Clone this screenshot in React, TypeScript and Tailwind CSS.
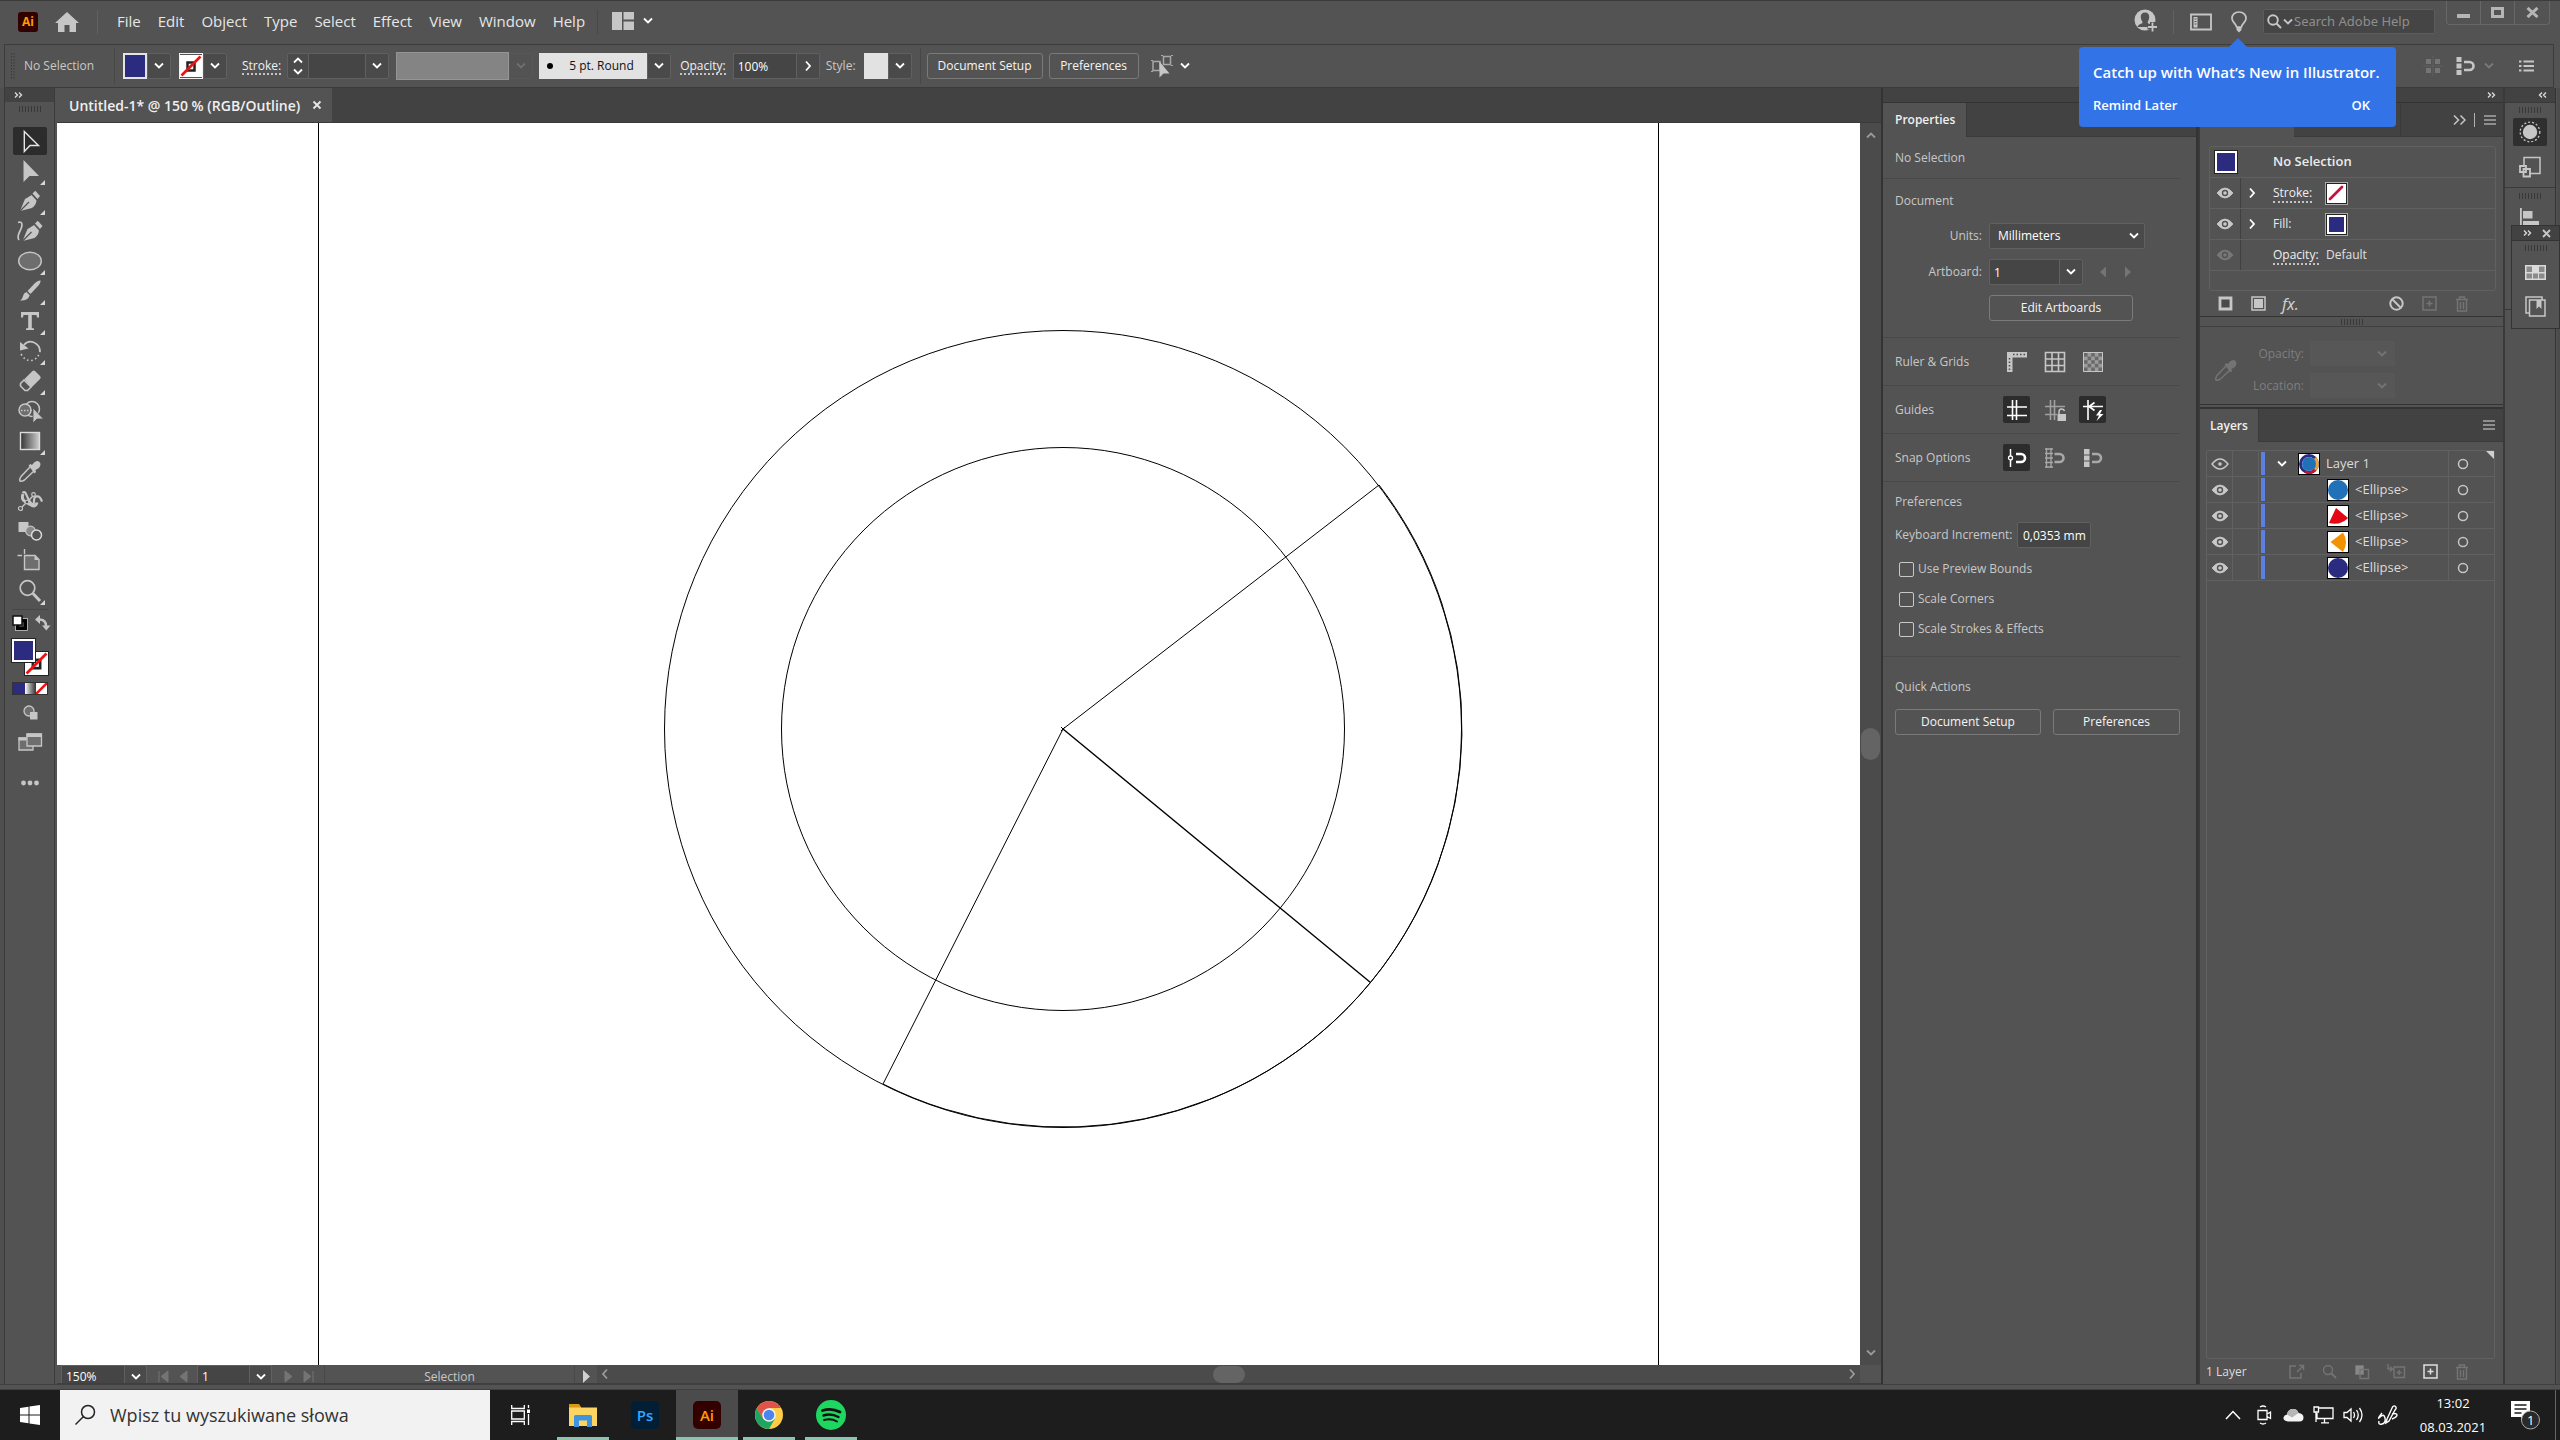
import type { ReactNode } from "react";

type IconProps = { w?: number; h?: number; box?: string; className?: string; children: ReactNode };

function Icon({ w = 26, h, box, className = "", children }: IconProps) {
  const hh = h ?? w;
  return (
    <svg width={w} height={hh} viewBox={box ?? `0 0 ${w} ${hh}`} fill="none" className={`shrink-0 ${className}`} aria-hidden="true">
      {children}
    </svg>
  );
}

const G = "#c6c6c6";

const Down = ({ className = "text-white" }: { className?: string }) => (
  <Icon w={12} h={8} className={className}>
    <path d="M2 1.5 6 5.5 10 1.5" stroke="currentColor" strokeWidth="1.8" />
  </Icon>
);

const Right = ({ className = "text-white" }: { className?: string }) => (
  <Icon w={8} h={12} className={className}>
    <path d="M2 1.5 6 6 2 10.5" stroke="currentColor" strokeWidth="1.8" />
  </Icon>
);

const DoubleRight = ({ flip = false }: { flip?: boolean }) => (
  <Icon w={10} h={8} className={flip ? "rotate-180" : ""}>
    <path d="M2 1.5 4.5 4 2 6.5M6 1.5 8.5 4 6 6.5" stroke="#d8d8d8" strokeWidth="1.4" />
  </Icon>
);

const Grip = () => (
  <Icon w={24} h={6}>
    <path d="M1.5 0v6M4.5 0v6M7.5 0v6M10.5 0v6M13.5 0v6M16.5 0v6M19.5 0v6M22.5 0v6" stroke="#383838" />
  </Icon>
);

const Menu = () => (
  <Icon w={14} h={12}>
    <path d="M1 2h12M1 6h12M1 10h12" stroke="#a8a8a8" strokeWidth="1.5" />
  </Icon>
);

const Eye = ({ hollow = false, className = "text-[#c8c8c8]" }: { hollow?: boolean; className?: string }) => (
  <Icon w={18} h={14} className={className}>
    <path
      d="M1 7Q5 2 9 2t8 5Q13 12 9 12T1 7Z"
      fill={hollow ? "none" : "currentColor"}
      stroke="currentColor"
      strokeWidth={hollow ? 1.4 : 0.8}
    />
    <circle cx="9" cy="7" r="3.2" fill="#535353" />
    <circle cx="9" cy="7" r="1.8" fill="currentColor" />
  </Icon>
);

const NoneSwatch = () => (
  <Icon w={22} h={22} className="h-full w-full">
    <rect width="22" height="22" fill="#fff" />
    <rect x="7.5" y="7.5" width="7" height="8" stroke="#222" strokeWidth="2.5" />
    <path d="M1.5 20.5 20.5 1.5" stroke="#ee1111" strokeWidth="2.6" />
  </Icon>
);

const Trash = ({ color = "#747474" }: { color?: string }) => (
  <Icon w={14} h={16}>
    <path d="M1 3.5h12M4.5 3V1h5v2M2.5 4v11h9V4M5.5 6v7M8.5 6v7" stroke={color} strokeWidth="1.4" />
  </Icon>
);

const Plus = ({ color }: { color: string }) => (
  <Icon w={15} h={15}>
    <path d="M1 1h13v13H1zM7.5 4.5v6M4.5 7.5h6" stroke={color} strokeWidth="1.5" />
  </Icon>
);

const Dropper = ({ color = G }: { color?: string }) => (
  <Icon>
    <path d="M13 9 4 18.5Q2 22 3 23T7.5 22L17 13" stroke={color} strokeWidth="1.5" />
    <path d="M11.5 7.5l2-1.5 1.5 1Q19 1.5 22 3.5t0 6.500l-3.5 2 .5 2-1.5 1.5z" fill={color} />
  </Icon>
);

const Nib = ({ x = 0 }: { x?: number }) => (
  <g transform={`translate(${x} 0)`}>
    <path d="M3 23 8 11Q13 8 14.5 7l5 5.5Q19 17 15 20Z" fill={G} />
    <path d="M3 23 12 14" stroke="#535353" strokeWidth="1.3" />
    <path d="M15.5 5.5 18.3 2.7 23 8 20.5 11Z" fill={G} />
  </g>
);

const tools: { name: string; corner?: boolean; art: ReactNode }[] = [
  { name: "Selection", art: <path d="M7.3 3.5V23.5L13 17.5H21.5Z" stroke="#e6e6e6" strokeWidth="1.4" /> },
  { name: "Direct selection", corner: true, art: <path d="M6.5 2V24L12.5 18H22Z" fill={G} /> },
  { name: "Pen", corner: true, art: <Nib /> },
  {
    name: "Curvature",
    art: (
      <>
        <Nib x={2.5} />
        <path d="M1 4.5Q5 3 5 7 5 9 2.5 14T2 22" stroke={G} strokeWidth="1.7" />
      </>
    ),
  },
  { name: "Ellipse", corner: true, art: <ellipse cx="13" cy="13" rx="11.3" ry="8.8" fill="#6e6e6e" stroke={G} strokeWidth="1.4" /> },
  {
    name: "Paintbrush",
    corner: true,
    art: (
      <>
        <path d="M23.5 2.5Q21 2 18 5L10.5 13 13.5 16 21 8Q24 4 23.5 2.5Z" fill={G} />
        <path d="M9.5 14 12.7 17.2Q11 23 3 22.5 5.5 21 6 18T9.5 14Z" fill={G} />
      </>
    ),
  },
  { name: "Type", corner: true, art: <path d="M4 4H22V9.5H20L19.5 7H14.8V20L17 20.5V22H9V20.5L11.2 20V7H6.5L6 9.5H4Z" fill={G} /> },
  {
    name: "Rotate",
    corner: true,
    art: (
      <>
        <path d="M7 7Q11 2 17 4.5T23 14" stroke={G} strokeWidth="1.8" />
        <path d="M3 4V12.5L11.5 10.5Z" fill={G} />
        <path d="M4 16Q8 23 14 22.5T23 14" stroke={G} strokeWidth="1.6" strokeDasharray="1.6 2.6" />
      </>
    ),
  },
  {
    name: "Eraser",
    corner: true,
    art: (
      <>
        <path d="M7.5 11 15.5 3Q17 2 18.5 3.5L23 8Q24.5 9.5 23 11L14.5 19.5Z" fill={G} />
        <path d="M7 12 3.5 15.5V18L8 22.5H10.5L14 19Z" stroke={G} strokeWidth="1.6" />
      </>
    ),
  },
  {
    name: "Shape builder",
    art: (
      <>
        <circle cx="15" cy="11" r="7.5" stroke={G} strokeWidth="1.5" />
        <circle cx="8" cy="12" r="6" fill="#6e6e6e" stroke={G} strokeWidth="1.5" />
        <path d="M4 12.5H18" stroke={G} strokeWidth="1.4" strokeDasharray="1.5 1.5" />
        <path d="M16 10V25L20 21H26.5Z" fill={G} stroke="#535353" strokeWidth=".8" />
      </>
    ),
  },
  {
    name: "Gradient",
    corner: true,
    art: (
      <>
        <defs>
          <linearGradient id="toolGradient">
            <stop offset="0" stopColor="#333" />
            <stop offset="1" stopColor="#d0d0d0" />
          </linearGradient>
        </defs>
        <rect x="3.5" y="4.5" width="19" height="17" fill="url(#toolGradient)" stroke="#dcdcdc" strokeWidth="1.4" />
      </>
    ),
  },
  { name: "Eyedropper", art: null },
  {
    name: "Puppet warp",
    art: (
      <>
        <path d="M5.5 5Q8 2.5 9.5 7T14 15Q17 18 17 13T20 8.5Q23 8 25 13.5" stroke={G} strokeWidth="2.2" />
        <path d="M6 6Q4 11 8 13.5T15 17.500Q19 19 20 14.5" stroke={G} strokeWidth="3" />
        <path d="M4 20 16 8" stroke={G} strokeWidth="1.4" />
        <circle cx="3.5" cy="20.5" r="2" fill="#535353" stroke={G} strokeWidth="1.2" />
        <circle cx="16.5" cy="6.5" r="1.8" fill="#535353" stroke={G} strokeWidth="1.2" />
        <circle cx="10" cy="14" r="1.8" fill="#535353" stroke={G} />
      </>
    ),
  },
  {
    name: "Blend",
    art: (
      <>
        <rect x="1.5" y="4" width="10" height="10" fill={G} />
        <circle cx="13.5" cy="13" r="4.8" fill="#888" stroke={G} strokeWidth="1.2" />
        <circle cx="19.5" cy="17" r="5" fill="#535353" stroke="#dadada" strokeWidth="1.5" />
      </>
    ),
  },
  {
    name: "Artboard",
    art: (
      <>
        <path d="M7.5 1V6M.5 7.5H5" stroke={G} strokeWidth="1.4" />
        <path d="M7.5 7.5H18L22 11.5V21.5H7.5Z" fill="#6e6e6e" stroke={G} strokeWidth="1.4" />
        <path d="M17.5 7.5V12H22Z" fill={G} />
      </>
    ),
  },
  {
    name: "Zoom",
    corner: true,
    art: (
      <>
        <circle cx="10.5" cy="10" r="7.3" stroke={G} strokeWidth="1.7" />
        <path d="M16 15.5 23 23" stroke={G} strokeWidth="3" />
      </>
    ),
  },
];

function Toolbar() {
  return (
    <aside className="flex w-[57px] shrink-0 flex-col border-l-4 border-[#4f4f4f] pr-[2px]">
      <div className="flex flex-1 flex-col items-center border-r border-l border-[#3a3a3a]">
        <div className="flex h-[14px] w-full items-center bg-[#424242] pl-2">
          <DoubleRight />
        </div>
        <div className="flex h-[13px] items-center">
          <Grip />
        </div>
        <nav className="flex flex-col items-center gap-[2px] pt-3" aria-label="Tools">
          {tools.map((t, i) => (
            <button
              key={t.name}
              aria-label={t.name}
              className={`relative flex h-7 w-[34px] items-center justify-center rounded-[2px] ${i === 0 ? "bg-[#2c2c2c]" : ""}`}
            >
              {t.art ? <Icon>{t.art}</Icon> : <Dropper />}
              {t.corner && (
                <Icon w={5} h={5} className="absolute right-0.5 bottom-0">
                  <path d="M5 0V5H0Z" fill="#d8d8d8" />
                </Icon>
              )}
            </button>
          ))}
        </nav>
        <div className="mt-1 h-px w-9 bg-[#474747]" />
        <div className="mt-1 flex w-full justify-between pr-0.5 pl-1.5">
          <button aria-label="Default fill and stroke">
            <Icon w={18}>
              <rect x="6.5" y="6.5" width="8" height="8" fill="#535353" stroke="#000" strokeWidth="3.5" />
              <rect x="4.5" y="4.5" width="12" height="12" stroke={G} strokeWidth=".8" />
              <rect x="2" y="2" width="9" height="9" fill="#fff" stroke="#111" strokeWidth="1.5" />
            </Icon>
          </button>
          <button aria-label="Swap fill and stroke">
            <Icon w={18}>
              <path d="M5 5.5Q12 5.5 12 12" stroke={G} strokeWidth="2.4" />
              <path d="M6 1V10L1 5.5ZM8 11.5h8.5L12.3 16.5Z" fill={G} />
            </Icon>
          </button>
        </div>
        <div className="relative mt-1.5 h-[38px] w-[38px]">
          <div className="absolute right-0 bottom-0 h-[25px] w-[25px] border border-[#222]">
            <NoneSwatch />
          </div>
          <div className="absolute top-0 left-0 h-[25px] w-[25px] border border-[#222] bg-white p-[2px]">
            <div className="h-full bg-[#2b2b80]" />
          </div>
        </div>
        <div className="mt-1.5 flex h-[13px] w-9 border border-[#333]">
          <div className="w-3 bg-[#2b2b80]" />
          <div className="w-[11px] bg-linear-to-r from-white to-[#333]" />
          <div className="flex-1 bg-white">
            <Icon w={11} h={11}>
              <path d="M0 11 11 0" stroke="#ee1111" strokeWidth="2.5" />
            </Icon>
          </div>
        </div>
        <button aria-label="Drawing mode" className="mt-1.5">
          <Icon w={24}>
            <circle cx="11" cy="10" r="5" fill="#6e6e6e" stroke={G} strokeWidth="1.3" />
            <rect x="12" y="11" width="7.5" height="7.5" fill={G} />
          </Icon>
        </button>
        <button aria-label="Screen mode" className="mt-1">
          <Icon>
            <path d="M2 9h14v12H2z" fill="#6e6e6e" stroke={G} strokeWidth="1.3" />
            <path d="M1.5 8.5h8v3h-8z" fill={G} />
            <path d="M10 5h14.500v12H10z" fill="#6e6e6e" stroke={G} strokeWidth="1.3" />
            <path d="M9.5 4.5h15v3.5h-15z" fill={G} />
          </Icon>
        </button>
        <button aria-label="Edit toolbar" className="mt-4">
          <Icon>
            <circle cx="6.5" cy="12" r="2.4" fill={G} />
            <circle cx="13" cy="12" r="2.4" fill={G} />
            <circle cx="19.5" cy="12" r="2.4" fill={G} />
          </Icon>
        </button>
      </div>
    </aside>
  );
}

const menus = ["File", "Edit", "Object", "Type", "Select", "Effect", "View", "Window", "Help"];

function TitleBar() {
  return (
    <header className="flex h-11 shrink-0 items-center border-t border-[#3c3c3c] pr-[10px] pb-[2px] pl-[18px]">
      <div className="flex h-5 w-5 items-center justify-center rounded-[3px] bg-[#330000] text-[12px] font-bold text-[#ff9a00]">Ai</div>
      <button aria-label="Home" className="ml-[17px]">
        <Icon w={24} h={20}>
          <path d="M12 0 24 11H21V20H14.5V13H9.5V20H3V11H0Z" fill={G} />
        </Icon>
      </button>
      <div className="ml-[18px] h-6 w-px bg-[#626262]" />
      <nav className="mb-[2px] ml-[19px] flex gap-[17px] text-[15px] leading-5 text-[#e6e6e6]">
        {menus.map((m) => (
          <button key={m}>{m}</button>
        ))}
      </nav>
      <div className="ml-3 h-6 w-px bg-[#484848]" />
      <button aria-label="Workspace layout" className="mb-[2px] ml-[14px] flex items-center gap-2">
        <Icon w={22} h={20}>
          <path d="M0 1h10v18H0zM11.5 1H22v7.500H11.5zM11.5 10.5H22V19H11.5z" fill={G} />
        </Icon>
        <Down />
      </button>
      <div className="flex-1" />
      <button aria-label="Account">
        <Icon w={25} h={25}>
          <circle cx="11" cy="11" r="10.5" fill={G} />
          <path d="M11 3.500c3 0 4.500 2 4.200 5-.2 2.500-1.500 3.500-1.500 5 0 1.300 5 2 5 4.500H3.500c0-2.500 5-3.200 5-4.500 0-1.500-1.500-2.500-1.700-5C6.500 5.500 8 3.500 11 3.500Z" fill="#535353" />
          <path d="M18.5 13v10M13.5 18h10" stroke="#535353" strokeWidth="5" />
          <path d="M18.5 13.5v9M14 18h9" stroke={G} strokeWidth="1.8" />
        </Icon>
      </button>
      <div className="ml-[14px] h-6 w-px bg-[#626262]" />
      <button aria-label="Panels" className="ml-4">
        <Icon w={22} h={18}>
          <path d="M1 1.5h20v15H1z" stroke={G} strokeWidth="1.8" />
          <path d="M3.5 4h4v10.5h-4z" fill={G} />
          <path d="M4.5 6h2M4.5 8.5h2M4.5 11h2" stroke="#535353" />
        </Icon>
      </button>
      <div className="relative ml-[19px] flex items-center">
        <button aria-label="Discover">
          <Icon w={16} h={22}>
            <path d="M8 1C3.5 1 1 4 1 7.5 1 11 5 12.5 5.5 16h5C11 12.5 15 11 15 7.5 15 4 12.5 1 8 1Z" stroke={G} strokeWidth="1.7" />
            <path d="M5.5 16h5v3L8 21.5 5.5 19Z" fill={G} />
          </Icon>
        </button>
        <WhatsNew />
      </div>
      <div className="ml-4 flex h-[25px] w-[172px] items-center rounded-[2px] border border-[#5c5c5c] bg-[#454545] pl-[3px]">
        <Icon w={15} h={15}>
          <circle cx="6" cy="6" r="4.8" stroke={G} strokeWidth="1.9" />
          <path d="m9.5 9.5 4.5 4.5" stroke={G} strokeWidth="2" />
        </Icon>
        <Down className="text-[#c6c6c6]" />
        <input aria-label="Search Adobe Help" placeholder="Search Adobe Help" className="w-[135px] bg-transparent font-['Noto_Sans',sans-serif] text-[13px] text-white outline-none placeholder:text-[#8f8f8f]" />
      </div>
      <div className="ml-[11px] flex h-6 self-start rounded-b-[4px] border border-t-0 border-[#676767]">
        <button aria-label="Minimize" className="flex w-[34px] items-center justify-center border-r border-[#676767]">
          <Icon w={13} h={13}><path d="M0 8h13v4H0z" fill="#b5b5b5" /></Icon>
        </button>
        <button aria-label="Maximize" className="flex w-[34px] items-center justify-center border-r border-[#676767]">
          <Icon w={13} h={11}><path d="M1.5 1.5h10v8h-10z" stroke="#b5b5b5" strokeWidth="3" /></Icon>
        </button>
        <button aria-label="Close" className="flex w-[34px] items-center justify-center">
          <Icon w={13} h={11}><path d="m1.5 1 10 9M11.5 1l-10 9" stroke="#b5b5b5" strokeWidth="3" /></Icon>
        </button>
      </div>
    </header>
  );
}

function WhatsNew() {
  return (
    <div role="dialog" aria-label="What's New" className="absolute top-[36px] left-[-152px] z-20 h-20 w-[317px] rounded-[4px] bg-[#3273e8] px-[14px] pt-[14px] text-white">
      <Icon w={20} h={10} className="absolute top-[-9px] left-[149px]">
        <path d="M0 10 10 0 20 10Z" fill="#3273e8" />
      </Icon>
      <div className="text-[15px] leading-[22px] font-semibold whitespace-nowrap">Catch up with What’s New in Illustrator.</div>
      <div className="mt-3 flex justify-between pr-3 text-[13px] leading-5 font-semibold">
        <button>Remind Later</button>
        <button>OK</button>
      </div>
    </div>
  );
}

const DropButton = ({ label, faded = false }: { label: string; faded?: boolean }) => (
  <button
    aria-label={label}
    className={`flex h-[26px] w-6 items-center justify-center rounded-r-[2px] border ${faded ? "border-[#575757]" : "border-[#606060] bg-[#4a4a4a]"}`}
  >
    <Down className={faded ? "text-[#6f6f6f]" : "text-white"} />
  </button>
);

const underlined = "border-b-2 border-dotted border-[#c4c4c4] leading-[15px] text-[#f0f0f0]";
const outlineButton = "h-[26px] rounded-[3px] border border-[#7a7a7a] text-[12px] leading-[22px] font-medium text-[#f5f5f5]";

function ControlBar() {
  return (
    <div className="mr-[6px] ml-1 flex h-11 shrink-0 items-center border border-[#3c3c3c] text-[12px] text-[#c8c8c8]">
      <Icon w={5} h={26} className="ml-[5px]">
        <path d="M1.5 0v26M4 0v26" stroke="#3a3a3a" strokeDasharray="1.5 1.5" />
      </Icon>
      <span className="ml-[9px] w-[90px]">No Selection</span>
      <div className="h-9 w-px bg-[#474747]" />
      <button aria-label="Fill colour" className="ml-2 h-[26px] w-6 border-2 border-[#e4e4e4] bg-[#2b2b80]" />
      <DropButton label="Fill options" />
      <button aria-label="Stroke colour" className="ml-2 h-[26px] w-6 border border-[#f0f0f0]"><NoneSwatch /></button>
      <DropButton label="Stroke options" />
      <label htmlFor="strokeWeight" className={`ml-[15px] ${underlined}`}>Stroke:</label>
      <div className="ml-[6px] flex h-[26px] w-[22px] flex-col items-center justify-between rounded-l-[2px] border border-[#606060] bg-[#4a4a4a] py-[2px]">
        <button aria-label="Increase stroke" className="rotate-180"><Down /></button>
        <button aria-label="Decrease stroke"><Down /></button>
      </div>
      <input id="strokeWeight" className="h-[26px] w-14 border-y border-[#606060] bg-[#454545] px-1" />
      <DropButton label="Stroke weights" />
      <div className="ml-[7px] h-7 w-[113px] border border-[#949494] bg-[#848484]" />
      <DropButton label="Width profile" faded />
      <button className="ml-[6px] flex h-[26px] w-[108px] items-center bg-[#e2e2e2] pl-2 text-[#111]">
        <span className="h-[6px] w-[6px] rounded-full bg-black" />
        <span className="ml-4">5 pt. Round</span>
      </button>
      <DropButton label="Brushes" />
      <label htmlFor="opacity" className={`ml-[9px] ${underlined}`}>Opacity:</label>
      <input id="opacity" defaultValue="100%" className="ml-[7px] h-[26px] w-16 border border-[#606060] bg-[#454545] px-1 text-white" />
      <button aria-label="Opacity slider" className="flex h-[26px] w-[23px] items-center justify-center rounded-r-[2px] border border-l-0 border-[#606060] bg-[#4a4a4a]"><Right /></button>
      <span className="ml-[6px]">Style:</span>
      <button aria-label="Graphic style" className="ml-2 h-[26px] w-6 bg-[#e2e2e2]" />
      <DropButton label="Styles" />
      <div className="ml-2 h-9 w-px bg-[#474747]" />
      <button className={`${outlineButton} ml-[6px] w-[116px]`}>Document Setup</button>
      <button className={`${outlineButton} ml-[6px] w-[90px]`}>Preferences</button>
      <button aria-label="Select similar" className="ml-3 flex items-center gap-1.5">
        <Icon w={22} h={24}>
          <path d="M2 7.5h7v9H2zM12.5 2.5h7v8h-7z" stroke="#a8a8a8" strokeWidth="1.5" />
          <path d="M0 6.5h2M0 17.5h2M10 1.5h2M20 1.5h2M20 11.5h2" stroke="#a8a8a8" />
          <path d="M8.5 7.5v16l4-4h6Z" fill={G} />
        </Icon>
        <Down />
      </button>
      <div className="flex-1" />
      <Icon w={20} h={20}>
        <path d="M3 3h5v5H3zM12 3h5v5h-5zM3 12h5v5H3zM12 12h5v5h-5z" fill="#757575" />
        <path d="M10 0v20M0 10h20" stroke="#616161" />
      </Icon>
      <button aria-label="Snap to pixel" className="ml-3 flex items-center gap-2">
        <Icon w={20} h={20}>
          <path d="M1.5 1h5v5h-5zM1.5 7.5h5v5h-5zM1.5 14h5v5h-5z" fill={G} />
          <path d="M9 6h5.500a4 4 0 0 1 0 8H9" stroke={G} strokeWidth="2.6" />
        </Icon>
        <Down className="text-[#7a7a7a]" />
      </button>
      <button aria-label="Control menu" className="mr-[18px] ml-6">
        <Icon w={16} h={12}>
          <path d="M0 1.5h2.5M0 6h2.5M0 10.5h2.5M4.5 1.5H15M4.5 6H15M4.5 10.5H15" stroke={G} strokeWidth="1.8" />
        </Icon>
      </button>
    </div>
  );
}

function Artwork() {
  return (
    <svg className="h-full w-full" viewBox="0 0 1803 1242" preserveAspectRatio="xMidYMid slice" fill="none" stroke="#000" strokeWidth="1" aria-label="Artboard">
      <path d="M261.5 0V1242M1601.5 0V1242" />
      <circle cx="1006" cy="606" r="398.5" />
      <circle cx="1006" cy="606" r="281.5" />
      <path d="M1322 362A398.5 398.5 0 0 1 1313.5 859.5 398.5 398.5 0 0 1 826 961L1006 606Z" />
      <path d="M1006 606 1313.5 859.5" strokeWidth="1.4" />
      <path d="m1004 604 4 4M1008 604l-4 4" />
    </svg>
  );
}

const navTriangle = "text-[#747474]";

function Workspace() {
  return (
    <main className="flex min-w-0 flex-1 flex-col">
      <div className="flex h-[35px] shrink-0 border-b border-[#3a3a3a] bg-[#424242]">
        <div className="flex w-[275px] items-center gap-3 bg-[#535353] pl-3 text-[14px] font-semibold whitespace-nowrap text-[#f0f0f0]">
          <span>Untitled-1* @ 150 % (RGB/Outline)</span>
          <button aria-label="Close document">
            <Icon w={10} h={10}><path d="m1.5 1.5 7 7M8.5 1.5l-7 7" stroke="#e6e6e6" strokeWidth="1.9" /></Icon>
          </button>
        </div>
      </div>
      <div className="flex min-h-0 flex-1">
        <div className="min-w-0 flex-1 overflow-hidden bg-white"><Artwork /></div>
        <div className="flex w-[21px] flex-col items-center justify-between bg-[#4b4b4b] py-2">
          <button aria-label="Scroll up" className="rotate-180"><Down className="text-[#9a9a9a]" /></button>
          <div className="h-8 w-[19px] rounded-full bg-[#646464]" />
          <button aria-label="Scroll down"><Down className="text-[#9a9a9a]" /></button>
        </div>
      </div>
      <div className="flex h-[19px] shrink-0 items-center border-b border-[#3f3f3f] pl-1 text-[12px] text-[#c8c8c8]">
        <input aria-label="Zoom level" defaultValue="150%" className="h-full w-16 border border-b-0 border-[#606060] bg-[#454545] pt-1 pl-1 text-white" />
        <button aria-label="Zoom levels" className="flex h-full w-[22px] items-center justify-center border border-b-0 border-l-0 border-[#606060] bg-[#4a4a4a] pt-1"><Down /></button>
        <Icon w={46} h={19} className={navTriangle}>
          <path d="M12 6v11M21 6v11l-7-5.500ZM40 6v11l-7-5.500Z" fill="currentColor" stroke="currentColor" />
        </Icon>
        <input aria-label="Artboard number" defaultValue="1" className="ml-1 h-full w-[53px] border border-b-0 border-[#606060] bg-[#454545] pt-1 pl-1 text-white" />
        <button aria-label="Artboards" className="flex h-full w-[22px] items-center justify-center border border-b-0 border-l-0 border-[#606060] bg-[#4a4a4a] pt-1"><Down /></button>
        <Icon w={52} h={19} className={navTriangle}>
          <path d="M13 6v11l7-5.500ZM32 6v11l7-5.500ZM41 6v11" fill="currentColor" stroke="currentColor" />
        </Icon>
        <div className="h-full w-[251px] border-x border-[#484848] pt-1 text-center leading-4">Selection</div>
        <Icon w={22} h={19}><path d="M8 5v13l7-6.500Z" fill="#d0d0d0" /></Icon>
        <div className="flex h-full min-w-0 flex-1 items-center justify-between bg-[#4b4b4b] px-1">
          <button aria-label="Scroll left" className="rotate-180"><Right className="text-[#9a9a9a]" /></button>
          <div className="h-[17px] w-8 rounded-full bg-[#646464]" />
          <button aria-label="Scroll right"><Right className="text-[#9a9a9a]" /></button>
        </div>
        <div className="w-[21px]" />
      </div>
    </main>
  );
}

const line = "border-b border-[#494949]";

function IconToggle({ label, on = false, children }: { label: string; on?: boolean; children: ReactNode }) {
  return (
    <button aria-label={label} aria-pressed={on} className={`flex h-[27px] w-[27px] items-center justify-center rounded-[2px] ${on ? "bg-[#2c2c2c]" : ""}`}>
      <Icon w={22}>{children}</Icon>
    </button>
  );
}

function OptionRow({ label, children }: { label: string; children: ReactNode }) {
  return (
    <div className={`-ml-3 flex h-12 items-center pl-3 ${line}`}>
      <span className="w-[108px]">{label}</span>
      <div className="flex gap-[11px]">{children}</div>
    </div>
  );
}

const checkerCells = [0, 1, 2, 3, 4].flatMap((r) => [0, 1, 2, 3, 4].filter((c) => (r + c) % 2 === 0).map((c) => [c, r]));

function Properties() {
  return (
    <section aria-label="Properties" className="flex w-[317px] shrink-0 flex-col border-r-2 border-l-2 border-[#333] text-[12px] text-[#c8c8c8]">
      <div className="h-[14px] bg-[#424242]" />
      <div className="flex h-[35px] border-t border-[#333] bg-[#424242]">
        <div className="flex w-[83px] items-center bg-[#535353] pl-3 font-semibold text-[#f0f0f0]">Properties</div>
        <div className="flex-1 border-b border-l border-[#3a3a3a]" />
      </div>
      <div className="mr-4 pl-3">
        <div className={`-ml-3 flex h-[42px] items-center pl-3 ${line}`}>No Selection</div>
        <div className={`-ml-3 pb-4 pl-3 ${line}`}>
          <div className="flex h-11 items-center">Document</div>
          <div className="grid grid-cols-[87px_1fr] gap-x-[7px] gap-y-[10px]">
            <label htmlFor="units" className="self-center text-right">Units:</label>
            <div className="relative w-[156px]">
              <select id="units" className="h-[26px] w-full appearance-none rounded-[2px] border border-[#606060] bg-[#4a4a4a] px-2 font-medium text-white">
                <option>Millimeters</option>
              </select>
              <div className="pointer-events-none absolute top-[9px] right-[5px]"><Down /></div>
            </div>
            <label htmlFor="artboard" className="self-center text-right">Artboard:</label>
            <div className="flex items-center">
              <input id="artboard" defaultValue="1" className="h-[26px] w-[70px] rounded-l-[2px] border border-r-0 border-[#606060] bg-[#454545] px-1 text-white" />
              <DropButton label="Artboards" />
              <Icon w={48} h={12}>
                <path d="M23 .5v11L17 6ZM42 .5v11L48 6Z" fill="#747474" />
              </Icon>
            </div>
            <button className={`${outlineButton} col-start-2 w-36`}>Edit Artboards</button>
          </div>
        </div>
        <OptionRow label="Ruler & Grids">
          <IconToggle label="Show rulers">
            <path d="M1 1h20v5.500H6.500V21H1z" fill={G} />
            <path d="M7 3.500h13M3.500 7v13" stroke="#4a4a4a" strokeWidth="1.5" strokeDasharray="1.5 2" />
          </IconToggle>
          <IconToggle label="Show grid">
            <path d="M1.5 1.5h19v19h-19zM8 1v20M14.5 1v20M1 8h20M1 14.5h20" stroke={G} strokeWidth="1.6" />
          </IconToggle>
          <IconToggle label="Show transparency grid">
            <path d="M1 1h20v20H1z" fill="#9c9c9c" />
            {checkerCells.map(([c, r]) => (
              <rect key={`${c}-${r}`} x={2 + c * 3.6} y={2 + r * 3.6} width="3.6" height="3.6" fill="#6a6a6a" />
            ))}
            <path d="M1.5 1.5h19v19h-19z" stroke={G} />
          </IconToggle>
        </OptionRow>
        <OptionRow label="Guides">
          <IconToggle label="Show guides" on>
            <path d="M6.5 1v20M10.5 1v20M1 8h20M1 16.5h20" stroke="#fff" strokeWidth="1.6" />
          </IconToggle>
          <IconToggle label="Lock guides">
            <path d="M6.5 1v20M10.5 1v20M1 7.5h20M1 15.5h12" stroke="#a0a0a0" strokeWidth="1.6" />
            <path d="M13.5 15h9v7h-9z" fill={G} />
            <path d="M15 15v-2.500a2.800 2.800 0 0 1 5.500-.5" stroke={G} strokeWidth="1.5" />
          </IconToggle>
          <IconToggle label="Smart guides" on>
            <path d="M6 1v20M1 7.5h20M12.5 3.5 7 7.5l5.500 4" stroke="#fff" strokeWidth="1.6" />
            <path d="m18 11-4 5.500h3L14.500 22l7-7h-3.500L20 11Z" fill="#fff" />
          </IconToggle>
        </OptionRow>
        <OptionRow label="Snap Options">
          <IconToggle label="Snap to point" on>
            <path d="M4.5 2v18" stroke="#fff" strokeWidth="1.5" />
            <circle cx="4.5" cy="11" r="2" fill="#2c2c2c" stroke="#fff" strokeWidth="1.3" />
            <path d="M10 7h5a3.800 3.800 0 0 1 0 8h-5" stroke="#fff" strokeWidth="2.6" />
          </IconToggle>
          <IconToggle label="Snap to grid">
            <path d="M2.5 1v20M7 1v20M1 2h8M1 6.500h8M1 11h8M1 15.500h8M1 20h8" stroke="#a8a8a8" strokeWidth="1.3" />
            <path d="M10.5 7h5a3.800 3.800 0 0 1 0 8h-5" stroke="#a8a8a8" strokeWidth="2.6" />
          </IconToggle>
          <IconToggle label="Snap to pixel">
            <path d="M2 2h5.500v5.500H2zM2 8.500h5.500v5H2zM2 14.500h5.500V20H2z" fill={G} />
            <path d="M10 7h5a3.800 3.800 0 0 1 0 8h-5" stroke="#a8a8a8" strokeWidth="2.6" />
          </IconToggle>
        </OptionRow>
        <div className={`-ml-3 pb-3 pl-3 ${line}`}>
          <div className="flex h-10 items-center">Preferences</div>
          <div className="mb-1.5 flex items-center gap-2">
            <label htmlFor="increment" className="w-[114px] whitespace-nowrap">Keyboard Increment:</label>
            <input id="increment" defaultValue="0,0353 mm" className="h-[26px] w-[74px] rounded-[2px] border border-[#606060] bg-[#454545] pl-[5px] text-white" />
          </div>
          {["Use Preview Bounds", "Scale Corners", "Scale Strokes & Effects"].map((t) => (
            <label key={t} className="flex h-[30px] items-center gap-1 pl-1">
              <input type="checkbox" className="h-[15px] w-[15px] appearance-none rounded-[2px] border border-[#c8c8c8]" />
              {t}
            </label>
          ))}
        </div>
        <div className="flex h-[52px] items-center pt-2">Quick Actions</div>
        <div className="flex gap-3">
          <button className={`${outlineButton} w-[146px]`}>Document Setup</button>
          <button className={`${outlineButton} flex-1`}>Preferences</button>
        </div>
      </div>
    </section>
  );
}

function AppearanceRow({ expand = false, dim = false, children }: { expand?: boolean; dim?: boolean; children: ReactNode }) {
  return (
    <div className="flex h-[31px] items-center border-b border-[#606060]">
      <button aria-label="Toggle visibility" className="flex h-full w-[31px] items-center justify-center border-r border-[#404040]">
        <Eye className={dim ? "text-[#777]" : "text-[#c8c8c8]"} />
      </button>
      <div className="flex w-8 justify-center pr-[10px]">{expand && <Right />}</div>
      {children}
    </div>
  );
}

const RedSlash = () => (
  <Icon w={16} h={16}><path d="M2 14 14 2" stroke="#c0143c" strokeWidth="2.8" strokeLinecap="round" /></Icon>
);

const layerRows: { label: string; art: ReactNode }[] = [
  { label: "<Ellipse>", art: <circle cx="10" cy="10" r="10" fill="#2071b8" /> },
  { label: "<Ellipse>", art: <path d="M8 2 20 12Q12 20 1 17Z" fill="#e30613" /> },
  { label: "<Ellipse>", art: <path d="M2.5 10 15 .5Q21 10 15 20Z" fill="#f39200" /> },
  { label: "<Ellipse>", art: <circle cx="10" cy="10" r="10" fill="#2b2b80" /> },
];

function LayerRow({ root = false, label, art }: { root?: boolean; label: string; art: ReactNode }) {
  return (
    <li className="relative flex h-[26px] border-b border-[#616161]">
      <button aria-label="Toggle visibility" className="flex w-[26px] items-center justify-center border-r border-[#606060]"><Eye hollow={root} /></button>
      <div className="w-[26px] border-r border-[#606060]" />
      <div className="my-px ml-[2px] w-1 bg-[#5b80e0]" />
      <div className="flex flex-1 items-center">
        {root ? (
          <button aria-label="Collapse layer" className="flex w-[33px] justify-center"><Down /></button>
        ) : (
          <div className="w-[62px]" />
        )}
        <div className="h-[22px] w-[22px] border border-black bg-white">
          <Icon w={20} h={20}>{art}</Icon>
        </div>
        <span className="ml-[6px] text-[13px] text-[#dcdcdc]">{label}</span>
      </div>
      <button aria-label="Target" className="flex w-[46px] items-center border-l border-[#606060] pl-2">
        <Icon w={12}><circle cx="6" cy="6" r="4.5" stroke={G} strokeWidth="1.5" /></Icon>
      </button>
      {root && <Icon w={8} h={8} className="absolute top-0 right-0"><path d="M0 0H8V8Z" fill="#d0d0d0" /></Icon>}
    </li>
  );
}

function SidePanels() {
  return (
    <section aria-label="Appearance and layers" className="flex w-[307px] shrink-0 flex-col border-r-2 border-l-2 border-[#3a3a3a] text-[12px] text-[#c8c8c8]">
      <div className="flex h-[14px] items-center justify-end bg-[#424242] pr-[7px]"><DoubleRight /></div>
      <div className="flex h-[35px] border-t border-[#333] bg-[#424242]">
        <div className="w-[94px] bg-[#535353]" />
        <div className="w-[107px] border-r border-b border-[#3a3a3a]" />
        <div className="flex flex-1 items-center justify-end gap-2 border-b border-[#3a3a3a] pr-[6px]">
          <Icon w={14} h={12}><path d="m2 1.5 4.5 4.5L2 10.5M8.5 1.5 13 6l-4.500 4.500" stroke={G} strokeWidth="1.5" /></Icon>
          <div className="h-[14px] w-px bg-[#b0b0b0]" />
          <button aria-label="Appearance menu"><Menu /></button>
        </div>
      </div>
      <div className="mt-[9px] mr-[7px] ml-[9px] rounded-[3px] border border-[#606060]">
        <div className="flex h-[31px] items-center border-b border-[#606060] pl-1">
          <div className="h-6 w-6 border border-[#222] bg-white p-[2px]"><div className="h-full bg-[#2b2b80]" /></div>
          <span className="ml-[35px] text-[13px] font-semibold text-[#ececec]">No Selection</span>
        </div>
        <AppearanceRow expand>
          <span className="w-[53px]"><span className={underlined}>Stroke:</span></span>
          <div className="h-[21px] w-[21px] border border-[#222] bg-white p-px outline outline-[#aaa]"><RedSlash /></div>
        </AppearanceRow>
        <AppearanceRow expand>
          <span className="w-[53px] text-[#ececec]">Fill:</span>
          <div className="h-[21px] w-[21px] border border-[#222] bg-white p-[2px] outline outline-[#aaa]"><div className="h-full bg-[#2b2b80]" /></div>
        </AppearanceRow>
        <AppearanceRow dim>
          <span className="w-[53px]"><span className={underlined}>Opacity:</span></span>
          <span className="text-[#e0e0e0]">Default</span>
        </AppearanceRow>
        <div className="h-[19px]" />
      </div>
      <div className="flex h-[26px] items-center border-b border-[#333] pr-[34px] pl-[18px]">
        <button aria-label="Add stroke"><Icon w={15} h={15}><path d="M2 2h11v11H2z" fill="#4a4a4a" stroke={G} strokeWidth="2.8" /></Icon></button>
        <button aria-label="Add fill" className="ml-[18px]">
          <Icon w={15} h={15}><path d="M1 1h13v13H1z" stroke={G} strokeWidth="1.5" /><path d="M3 3h9v9H3z" fill={G} /></Icon>
        </button>
        <button aria-label="Add effect" className="ml-4 font-['Noto_Sans',sans-serif] text-[16px] leading-5 text-[#d0d0d0] italic">fx.</button>
        <div className="flex-1" />
        <div className="flex items-center gap-[18px]">
          <button aria-label="Clear appearance"><Icon w={15} h={15}><path d="M3 3l9 9" stroke={G} strokeWidth="2" /><circle cx="7.5" cy="7.5" r="6.2" stroke={G} strokeWidth="2" /></Icon></button>
          <button aria-label="Duplicate item"><Plus color="#747474" /></button>
          <button aria-label="Delete item"><Trash /></button>
        </div>
      </div>
      <div className="flex h-[10px] items-center justify-center border-b border-[#404040]"><Grip /></div>
      <div className="flex h-[78px] items-center border-b border-[#333] pt-2 pl-[13px] text-[#7e7e7e]">
        <Dropper color="#747474" />
        <div className="ml-3 grid grid-cols-[53px_85px] gap-x-[6px] gap-y-[7px]">
          {["Opacity:", "Location:"].map((t) => (
            <label key={t} className="contents">
              <span className="self-center text-right">{t}</span>
              <span className="relative flex">
                <select disabled className="h-[25px] w-full appearance-none bg-[#575757]" />
                <span className="pointer-events-none absolute top-[9px] right-[7px]"><Down className="text-[#747474]" /></span>
              </span>
            </label>
          ))}
        </div>
      </div>
      <div className="h-[2px]" />
      <div className="flex h-[35px] border-t-2 border-[#333] bg-[#424242]">
        <div className="flex w-[58px] items-center bg-[#535353] pl-[10px] font-semibold text-[#f0f0f0]">Layers</div>
        <div className="flex flex-1 items-center justify-end border-b border-l border-[#3a3a3a] pr-[7px]"><button aria-label="Layers menu"><Menu /></button></div>
      </div>
      <ul className="mt-2 mr-2 ml-[6px] flex-1 rounded-[2px] border border-[#616161]">
        <LayerRow
          root
          label="Layer 1"
          art={
            <>
              <circle cx="10" cy="10" r="8.5" stroke="#2b2b80" strokeWidth="3" />
              <path d="M16 4A8.5 8.5 0 0 1 16 16" stroke="#e8a33a" strokeWidth="3" />
              <path d="M16 16A8.5 8.5 0 0 1 6 17.500" stroke="#c41230" strokeWidth="3" />
              <circle cx="10" cy="10" r="7" fill="#2071b8" />
            </>
          }
        />
        {layerRows.map((r, i) => (
          <LayerRow key={i} label={r.label} art={r.art} />
        ))}
      </ul>
      <div className="flex h-[25px] items-center pr-[34px] pl-[6px] text-[#dcdcdc]">
        <span>1 Layer</span>
        <div className="ml-auto flex items-center gap-[17px]">
          <button aria-label="Export"><Icon w={16} h={16}><path d="M7 2H1v12h11V9M10 1.5h4.500V6M14 2 8 8" stroke="#747474" strokeWidth="1.5" /></Icon></button>
          <button aria-label="Find layer"><Icon w={15} h={15}><circle cx="6" cy="6" r="4.5" stroke="#747474" strokeWidth="1.4" /><path d="m9 9 5 5" stroke="#747474" strokeWidth="1.8" /></Icon></button>
          <button aria-label="Clipping mask"><Icon w={16} h={16}><path d="M1.5 1.5h8v9h-8z" fill="#888" stroke="#747474" /><path d="M6 5.5h8.500v9H6z" stroke="#747474" strokeWidth="1.5" /></Icon></button>
          <button aria-label="New sublayer"><Icon w={19} h={15}><path d="M7 3h10.500v10.500H7zM12.2 6v5M9.7 8.500h5M1 0v5h4M3 2.500 5.500 5 3 7.500" stroke="#747474" strokeWidth="1.4" /></Icon></button>
          <button aria-label="New layer"><Plus color="#e0e0e0" /></button>
          <button aria-label="Delete layer"><Trash /></button>
        </div>
      </div>
    </section>
  );
}

function Dock() {
  return (
    <aside className="relative flex w-[55px] shrink-0 flex-col border-r-[3px] border-[#4c4c4c]">
      <div className="mr-px flex flex-1 flex-col items-center border-r border-[#333]">
        <div className="flex h-[14px] w-full items-center justify-end bg-[#424242] pr-[7px]"><DoubleRight flip /></div>
        <div className="flex h-[86px] w-full flex-col items-center border-t border-b border-[#3a3a3a] pt-1">
          <Grip />
          <button aria-label="Appearance" className="mt-[5px] flex h-7 w-[34px] items-center justify-center rounded-[2px] bg-[#2f2f2f]">
            <Icon w={22}>
              <circle cx="11" cy="11" r="7.2" fill={G} />
              <circle cx="11" cy="11" r="9.8" stroke={G} strokeWidth="1.3" strokeDasharray="2 2" />
            </Icon>
          </button>
          <button aria-label="Graphic styles" className="mt-[10px]">
            <Icon w={22}>
              <path d="M5 11V1.5h16V17.5H10" stroke={G} strokeWidth="1.5" />
              <path d="M1 10h6v6H1zM4.5 13h6.500v7.500H4.5z" stroke={G} strokeWidth="1.8" />
            </Icon>
          </button>
        </div>
        <div className="flex h-[122px] w-full flex-col items-center border-b border-[#3a3a3a] pt-[5px]">
          <Grip />
          <button aria-label="Align" className="mt-[9px]">
            <Icon w={22} h={20}><path d="M1 0h1.800v20H1zM4 3h9.500v7.500H4zM4 13h16v7H4z" fill={G} /></Icon>
          </button>
        </div>
      </div>
      <div className="absolute top-[137px] left-[6px] flex w-[49px] flex-col items-center border border-[#333] bg-[#535353]">
        <div className="flex h-[15px] w-full items-center justify-between border-b border-[#333] bg-[#424242] pr-2 pl-[10px]">
          <DoubleRight />
          <button aria-label="Close panel"><Icon w={9} h={9}><path d="m1 1 7 7M8 1 1 8" stroke={G} strokeWidth="1.9" /></Icon></button>
        </div>
        <div className="mt-1"><Grip /></div>
        <button aria-label="Swatches" className="mt-[14px]">
          <Icon w={21} h={15}>
            <path d="M0 0h21v15H0z" fill="#dadada" />
            <path d="M1.5 1.5h5.500V7H1.5zM14 1.5h5.500V7H14zM1.5 8.5h5.500v5H1.5zM8 8.5h5v5H8zM14 8.5h5.500v5H14z" fill="#8a8a8a" />
          </Icon>
        </button>
        <button aria-label="Libraries" className="mt-4 mb-[11px]">
          <Icon w={21} h={21}>
            <path d="M4 17H1V1h16v3M4.5 4H20v16H4.500z" stroke={G} strokeWidth="1.5" />
            <path d="M11.5 4h5v9L14 10.500 11.500 13Z" fill={G} />
          </Icon>
        </button>
      </div>
    </aside>
  );
}

function TaskButton({ label, active = false, running = false, children }: { label: string; active?: boolean; running?: boolean; children: ReactNode }) {
  return (
    <button aria-label={label} className={`relative flex h-full w-[62px] items-center justify-center ${active ? "bg-[#4b4b4b]" : ""}`}>
      {children}
      {running && <span className={`absolute bottom-0 h-[3px] bg-[#8cc4b0] ${active ? "inset-x-0" : "inset-x-[5px]"}`} />}
    </button>
  );
}

function Taskbar() {
  return (
    <footer className="flex h-[50px] shrink-0 items-center bg-[#1d1d1d]">
      <button aria-label="Start" className="flex h-full w-[60px] items-center justify-center">
        <Icon w={20} h={20}>
          <path d="M0 3 8.500 1.700V9.500H0ZM9.500 1.500 20 0V9.500H9.500ZM0 10.500H8.500V18.300L0 17ZM9.500 10.500H20V20L9.500 18.500Z" fill="#fff" />
        </Icon>
      </button>
      <label className="flex h-full w-[430px] items-center bg-[#f2f2f2] pl-[15px]">
        <Icon w={21} h={22}>
          <circle cx="13" cy="8" r="6.5" stroke="#222" strokeWidth="1.5" />
          <path d="M8.5 12.5.5 20.500" stroke="#222" strokeWidth="1.5" />
        </Icon>
        <input aria-label="Search" placeholder="Wpisz tu wyszukiwane słowa" className="ml-[14px] flex-1 bg-transparent text-[18px] outline-none placeholder:text-[#333]" />
      </label>
      <TaskButton label="Task view">
        <Icon w={20} h={20}>
          <path d="M.7 0v3.500h12.600V0M.7 20v-3.500h12.600V20M.7 6h12.600v8H.7zM17.500 0v3M17.500 9v11" stroke="#fff" strokeWidth="1.3" />
          <path d="M16 4.500h3V8h-3z" fill="#fff" />
        </Icon>
      </TaskButton>
      <TaskButton label="File Explorer" running>
        <Icon w={28} h={24}>
          <path d="M0 1h10l2 3v4H0z" fill="#d99a15" />
          <path d="M0 4.500h28V23H0z" fill="#fcd462" />
          <path d="M5 13.500Q5 12 6.500 12h15Q23 12 23 13.500V24H18V17.500H10V24H5Z" fill="#3f94dd" />
        </Icon>
      </TaskButton>
      <TaskButton label="Photoshop">
        <span className="flex h-7 w-7 items-center justify-center rounded-[5px] bg-[#001e36] text-[15px] font-semibold text-[#31a8ff]">Ps</span>
      </TaskButton>
      <TaskButton label="Illustrator" active running>
        <span className="flex h-7 w-7 items-center justify-center rounded-[5px] bg-[#330000] text-[15px] font-semibold text-[#ff9a00]">Ai</span>
      </TaskButton>
      <TaskButton label="Chrome" running>
        <Icon w={28} box="0 0 28 28">
          <circle cx="14" cy="14" r="14" fill="#ffcd46" />
          <path d="M1.900 7A14 14 0 0 0 14 28L20 17.500 14 14 8 17.500Z" fill="#1fa463" />
          <path d="M1.900 7A14 14 0 0 1 26.100 7H14L8 17.500Z" fill="#e0524a" />
          <circle cx="14" cy="14" r="6.8" fill="#f4f4f4" />
          <circle cx="14" cy="14" r="5.3" fill="#4a86ee" />
        </Icon>
      </TaskButton>
      <TaskButton label="Spotify" running>
        <Icon w={30} box="0 0 30 30">
          <circle cx="15" cy="15" r="15" fill="#1ed760" />
          <path d="M6.500 10.500Q15.500 7.500 24 12" stroke="#111" strokeWidth="2.8" strokeLinecap="round" />
          <path d="M7.500 15.500Q15 13 22.500 17" stroke="#111" strokeWidth="2.4" strokeLinecap="round" />
          <path d="M8 20Q15 18 21 21.500" stroke="#111" strokeWidth="2" strokeLinecap="round" />
        </Icon>
      </TaskButton>
      <div className="ml-auto flex h-full items-center">
        <Icon w={16} h={10}><path d="m1 9 7-7.500L15 9" stroke="#fff" strokeWidth="1.5" /></Icon>
        <Icon w={16} h={20} className="ml-[15px]">
          <path d="M2 5.500h9v9H2zM11 9l3.500-2v6.500L11 11.500M4 2q3-2 6 0M4 18q3 2 6 0" stroke="#fff" strokeWidth="1.3" />
        </Icon>
        <Icon w={21} h={14} className="ml-[11px]">
          <path d="M5 13.500Q0 13 .5 9.500 1 7 4 6.500 5 1 10 1q4.500 0 5.500 4Q20.500 5.500 20.500 9.500q0 4-4 4Z" fill="#f4f4f4" />
          <path d="M4 6.500Q5 1 10 1q4.500 0 5.500 4L9 9.500Z" fill="#b5b5b5" />
        </Icon>
        <Icon w={21} h={18} className="ml-[9px]">
          <path d="M6 2h14v10.500H4V7M11.500 13v4M8 16.800h8M1 1h4.500v5H1zM3 6v10" stroke="#fff" strokeWidth="1.3" />
        </Icon>
        <Icon w={22} h={18} className="ml-[9px]">
          <path d="M1 6.500h3L8 3v12l-4-3.500H1zM10.500 6q2 3 0 6M13.500 4q3.500 5 0 10M16.500 2q5 7 0 14" stroke="#fff" strokeWidth="1.3" />
        </Icon>
        <Icon w={21} h={20} className="ml-[13px]">
          <path d="M9 14 14.500 2Q16 0 17.500 1.500T17 5L11 16 8 18ZM1 16q-1 4 3 3t3-6-5-1 2-4M14 9q5-1 5 1t-5 4" stroke="#fff" strokeWidth="1.4" />
        </Icon>
        <div className="ml-[14px] w-20 text-center text-[13px] leading-6 text-white">
          <div>13:02</div>
          <div>08.03.2021</div>
        </div>
        <button aria-label="Notifications" className="relative ml-[17px]">
          <Icon w={32} h={30}>
            <path d="M1 1h19v16h-5l-4 4v-4H1z" fill="#fff" />
            <path d="M4.500 5h12M4.500 9h12M4.500 13h7" stroke="#1d1d1d" strokeWidth="1.3" />
            <circle cx="20.500" cy="20" r="9" fill="#2a2a2a" stroke="#aaa" />
          </Icon>
          <span className="absolute top-[11px] left-[17px] text-[13px] leading-[18px] text-white">1</span>
        </button>
        <div className="mr-1 ml-[13px] h-full w-px bg-[#666]" />
      </div>
    </footer>
  );
}

export default function App() {
  return (
    <div className="flex h-screen flex-col overflow-hidden bg-[#535353] font-['Open_Sans','Noto_Sans',sans-serif]">
      <TitleBar />
      <ControlBar />
      <div className="flex min-h-0 flex-1">
        <Toolbar />
        <Workspace />
        <Properties />
        <SidePanels />
        <Dock />
      </div>
      <div className="h-[6px] shrink-0 border-t border-b border-[#404040]" />
      <Taskbar />
    </div>
  );
}
